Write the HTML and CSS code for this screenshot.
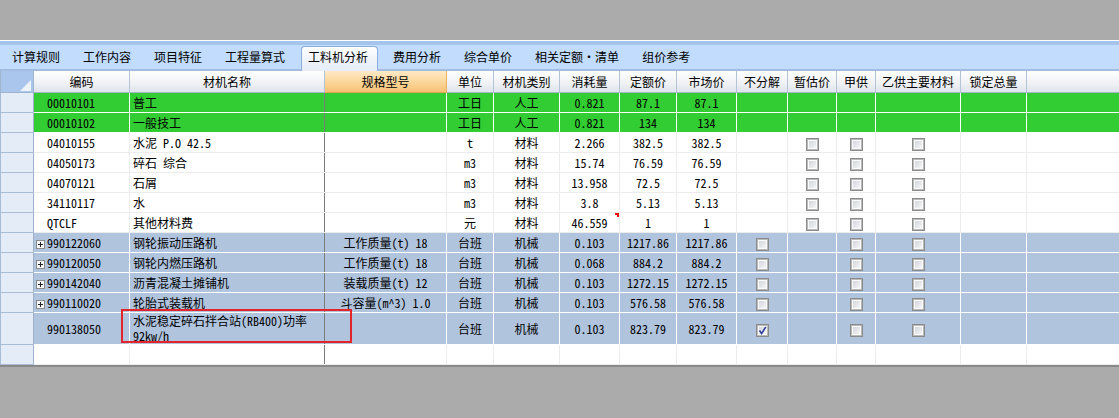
FILE: index.html
```html
<!DOCTYPE html>
<html lang="zh">
<head>
<meta charset="utf-8">
<title>工料机分析</title>
<link rel="stylesheet" href="styles.css">
</head>
<body>
<div class="top"></div>
<div class="tabbar">
  <span class="tab">计算规则</span>
  <span class="tab">工作内容</span>
  <span class="tab">项目特征</span>
  <span class="tab">工程量算式</span>
  <span class="tab active">工料机分析</span>
  <span class="tab">费用分析</span>
  <span class="tab">综合单价</span>
  <span class="tab">相关定额·清单</span>
  <span class="tab">组价参考</span>
</div>
<div class="grid-wrap">
<table class="grid">
  <colgroup>
    <col style="width:33px"><col style="width:96px"><col style="width:195px"><col style="width:122px">
    <col style="width:47px"><col style="width:66px"><col style="width:60px"><col style="width:57px">
    <col style="width:60px"><col style="width:51px"><col style="width:49px"><col style="width:39px">
    <col style="width:85px"><col style="width:66px"><col style="width:93px">
  </colgroup>
  <thead>
    <tr>
      <th class="corner"><svg class="tri" width="11" height="11" viewBox="0 0 11 11"><polygon points="11,0 11,11 0,11" fill="#eef3fa"/></svg></th>
      <th>编码</th><th>材机名称</th><th class="sel">规格型号</th><th>单位</th><th>材机类别</th>
      <th>消耗量</th><th>定额价</th><th>市场价</th><th>不分解</th><th>暂估价</th><th>甲供</th>
      <th>乙供主要材料</th><th>锁定总量</th><th></th>
    </tr>
  </thead>
  <tbody>
    <tr class="g">
      <td class="rh"></td><td class="code"><span class="sp"></span>00010101</td><td class="name">普工</td><td class="spec"></td>
      <td>工日</td><td>人工</td><td>0.821</td><td>87.1</td><td>87.1</td><td></td><td></td><td></td><td></td><td></td><td></td>
    </tr>
    <tr class="g">
      <td class="rh"></td><td class="code"><span class="sp"></span>00010102</td><td class="name">一般技工</td><td class="spec"></td>
      <td>工日</td><td>人工</td><td>0.821</td><td>134</td><td>134</td><td></td><td></td><td></td><td></td><td></td><td></td>
    </tr>
    <tr class="w">
      <td class="rh"></td><td class="code"><span class="sp"></span>04010155</td><td class="name">水泥 P.O 42.5</td><td class="spec"></td>
      <td>t</td><td>材料</td><td>2.266</td><td>382.5</td><td>382.5</td><td></td>
      <td><span class="cb"></span></td><td><span class="cb"></span></td><td><span class="cb"></span></td><td></td><td></td>
    </tr>
    <tr class="w">
      <td class="rh"></td><td class="code"><span class="sp"></span>04050173</td><td class="name">碎石 综合</td><td class="spec"></td>
      <td>m3</td><td>材料</td><td>15.74</td><td>76.59</td><td>76.59</td><td></td>
      <td><span class="cb"></span></td><td><span class="cb"></span></td><td><span class="cb"></span></td><td></td><td></td>
    </tr>
    <tr class="w">
      <td class="rh"></td><td class="code"><span class="sp"></span>04070121</td><td class="name">石屑</td><td class="spec"></td>
      <td>m3</td><td>材料</td><td>13.958</td><td>72.5</td><td>72.5</td><td></td>
      <td><span class="cb"></span></td><td><span class="cb"></span></td><td><span class="cb"></span></td><td></td><td></td>
    </tr>
    <tr class="w">
      <td class="rh"></td><td class="code"><span class="sp"></span>34110117</td><td class="name">水</td><td class="spec"></td>
      <td>m3</td><td>材料</td><td>3.8</td><td>5.13</td><td>5.13</td><td></td>
      <td><span class="cb"></span></td><td><span class="cb"></span></td><td><span class="cb"></span></td><td></td><td></td>
    </tr>
    <tr class="w">
      <td class="rh"></td><td class="code"><span class="sp"></span>QTCLF</td><td class="name">其他材料费</td><td class="spec"></td>
      <td>元</td><td>材料</td><td class="mark">46.559</td><td>1</td><td>1</td><td></td>
      <td><span class="cb"></span></td><td><span class="cb"></span></td><td><span class="cb"></span></td><td></td><td></td>
    </tr>
    <tr class="b">
      <td class="rh"></td><td class="code"><span class="exp"><svg width="9" height="9" viewBox="0 0 9 9"><rect x="0.5" y="0.5" width="8" height="8" fill="#f4f6f8" stroke="#8a8a8a"/><path d="M2 4.5H7M4.5 2V7" stroke="#222" stroke-width="1"/></svg></span>990122060</td><td class="name">钢轮振动压路机</td><td class="spec">工作质量(t) 18</td>
      <td>台班</td><td>机械</td><td>0.103</td><td>1217.86</td><td>1217.86</td><td><span class="cb"></span></td>
      <td></td><td><span class="cb"></span></td><td><span class="cb"></span></td><td></td><td></td>
    </tr>
    <tr class="b">
      <td class="rh"></td><td class="code"><span class="exp"><svg width="9" height="9" viewBox="0 0 9 9"><rect x="0.5" y="0.5" width="8" height="8" fill="#f4f6f8" stroke="#8a8a8a"/><path d="M2 4.5H7M4.5 2V7" stroke="#222" stroke-width="1"/></svg></span>990120050</td><td class="name">钢轮内燃压路机</td><td class="spec">工作质量(t) 18</td>
      <td>台班</td><td>机械</td><td>0.068</td><td>884.2</td><td>884.2</td><td><span class="cb"></span></td>
      <td></td><td><span class="cb"></span></td><td><span class="cb"></span></td><td></td><td></td>
    </tr>
    <tr class="b">
      <td class="rh"></td><td class="code"><span class="exp"><svg width="9" height="9" viewBox="0 0 9 9"><rect x="0.5" y="0.5" width="8" height="8" fill="#f4f6f8" stroke="#8a8a8a"/><path d="M2 4.5H7M4.5 2V7" stroke="#222" stroke-width="1"/></svg></span>990142040</td><td class="name">沥青混凝土摊铺机</td><td class="spec">装载质量(t) 12</td>
      <td>台班</td><td>机械</td><td>0.103</td><td>1272.15</td><td>1272.15</td><td><span class="cb"></span></td>
      <td></td><td><span class="cb"></span></td><td><span class="cb"></span></td><td></td><td></td>
    </tr>
    <tr class="b">
      <td class="rh"></td><td class="code"><span class="exp"><svg width="9" height="9" viewBox="0 0 9 9"><rect x="0.5" y="0.5" width="8" height="8" fill="#f4f6f8" stroke="#8a8a8a"/><path d="M2 4.5H7M4.5 2V7" stroke="#222" stroke-width="1"/></svg></span>990110020</td><td class="name">轮胎式装载机</td><td class="spec">斗容量(m^3) 1.0</td>
      <td>台班</td><td>机械</td><td>0.103</td><td>576.58</td><td>576.58</td><td><span class="cb"></span></td>
      <td></td><td><span class="cb"></span></td><td><span class="cb"></span></td><td></td><td></td>
    </tr>
    <tr class="b tall">
      <td class="rh"></td><td class="code"><span class="sp"></span>990138050</td><td class="name wrap">水泥稳定碎石拌合站(RB400)功率<br>92kw/h</td><td class="spec"></td>
      <td>台班</td><td>机械</td><td>0.103</td><td>823.79</td><td>823.79</td><td><span class="cb on"><svg width="11" height="11" viewBox="0 0 11 11"><path d="M2.5 5.5L4.6 8.6L8.8 1.8" fill="none" stroke="#2b3f9e" stroke-width="1.6"/></svg></span></td>
      <td></td><td><span class="cb"></span></td><td><span class="cb"></span></td><td></td><td></td>
    </tr>
    <tr class="w">
      <td class="rh"></td><td class="code"></td><td class="name"></td><td class="spec"></td>
      <td></td><td></td><td></td><td></td><td></td><td></td><td></td><td></td><td></td><td></td><td></td>
    </tr>
  </tbody>
</table>
<div class="annot"></div>
</div>
<div class="footer"></div>
</body>
</html>
```

FILE: styles.css
```css
html, body {
  margin: 0;
  background: #ababab;
}
body {
  font-family: "Noto Sans CJK SC", "Noto Sans", sans-serif;
  font-size: 12px;
  font-feature-settings: "hwid" 1;
  color: #000;
  width: 1119px;
  overflow: hidden;
}
.top {
  height: 40px;
}
.tabbar {
  display: flex;
  align-items: flex-end;
  height: 28px;
  border-top: 1px solid #ffffff;
  border-bottom: 2px solid #a2bde0;
  background: linear-gradient(#a5c4ec 0, #a5c4ec 4px, #c1dcfd 4px, #c1dcfd 100%);
}
.tab {
  height: 20px;
  line-height: 20px;
  padding: 0 11px 2px 12px;
  white-space: nowrap;
}
.tab.active {
  position: relative;
  margin: 0 3px -2px 5px;
  padding: 0 9px 4px 6px;
  border: 1px solid #8eaedb;
  border-bottom: none;
  border-radius: 4px 4px 0 0;
  background: linear-gradient(#fdfeff, #edf2f9 60%, #e6edf7);
}
.grid-wrap {
  position: relative;
  background: #ffffff;
}
.grid {
  border-collapse: collapse;
  table-layout: fixed;
  width: 1119px;
}
.grid th, .grid td {
  padding: 0;
  overflow: hidden;
  white-space: nowrap;
  text-align: center;
  vertical-align: middle;
}
.grid thead tr {
  height: 21px;
}
.grid th {
  font-weight: normal;
  border: 1px solid #b4c4d8;
  border-top: none;
  border-bottom-color: #a6b7cc;
  background: linear-gradient(#fefefe, #f0f2f5 55%, #dfe4eb);
}
.grid th.sel {
  background: linear-gradient(#fee9c6, #fbd597 55%, #f7c174);
  border-color: #e9b066;
  border-bottom-color: #e2a450;
}
.grid th.corner {
  background: #aac6ec;
  border-color: #9fb4cf;
  text-align: right;
  vertical-align: bottom;
}
.tri {
  display: block;
  margin: 0 2px 1px auto;
}
.grid tbody tr {
  height: 20px;
}
.grid tbody tr.tall {
  height: 32px;
}
.grid tr.g td {
  background: #32cd32;
  border: 1px solid #ffffff;
}
.grid tr.b td {
  background: #b0c4de;
  border: 1px solid #ffffff;
}
.grid tr.w td {
  background: #ffffff;
  border: 1px solid #ececec;
}
.grid tbody td.rh {
  background: #e4ecf8;
  border: 1px solid #a9bcd5;
  border-right-color: #9db1cb;
}
.grid td.code {
  text-align: left;
  padding-left: 2px;
}
.grid td.name {
  text-align: left;
  padding-left: 3px;
}
.grid tbody td.name {
  border-right: 1px solid #7c7c7c;
}
.grid td.wrap {
  white-space: normal;
  line-height: 15px;
}
.sp, .exp {
  display: inline-block;
  width: 9px;
  height: 9px;
  margin-right: 2px;
  vertical-align: -1px;
}
.exp svg {
  display: block;
}
.cb {
  display: inline-block;
  box-sizing: border-box;
  width: 13px;
  height: 13px;
  vertical-align: middle;
  border: 1px solid #8b8b8b;
  box-shadow: inset 0 0 0 1px #b9b9b9, inset 0 0 0 2px #fbfbfb;
  background: linear-gradient(135deg, #c7ccd3, #e6e8eb 55%, #ffffff);
}
.cb.on svg {
  display: block;
  margin: 0;
}
.grid tbody tr.w td.mark {
  background-color: #ffffff;
  background-image: linear-gradient(45deg, transparent 50%, #ee1111 50%);
  background-repeat: no-repeat;
  background-position: top right;
  background-size: 5px 5px;
}
.annot {
  position: absolute;
  left: 121px;
  top: 238px;
  width: 231px;
  height: 34px;
  box-sizing: border-box;
  border: 2px solid #e3242b;
  pointer-events: none;
}
.footer {
  border-top: 2px solid #898989;
  height: 60px;
}
```
